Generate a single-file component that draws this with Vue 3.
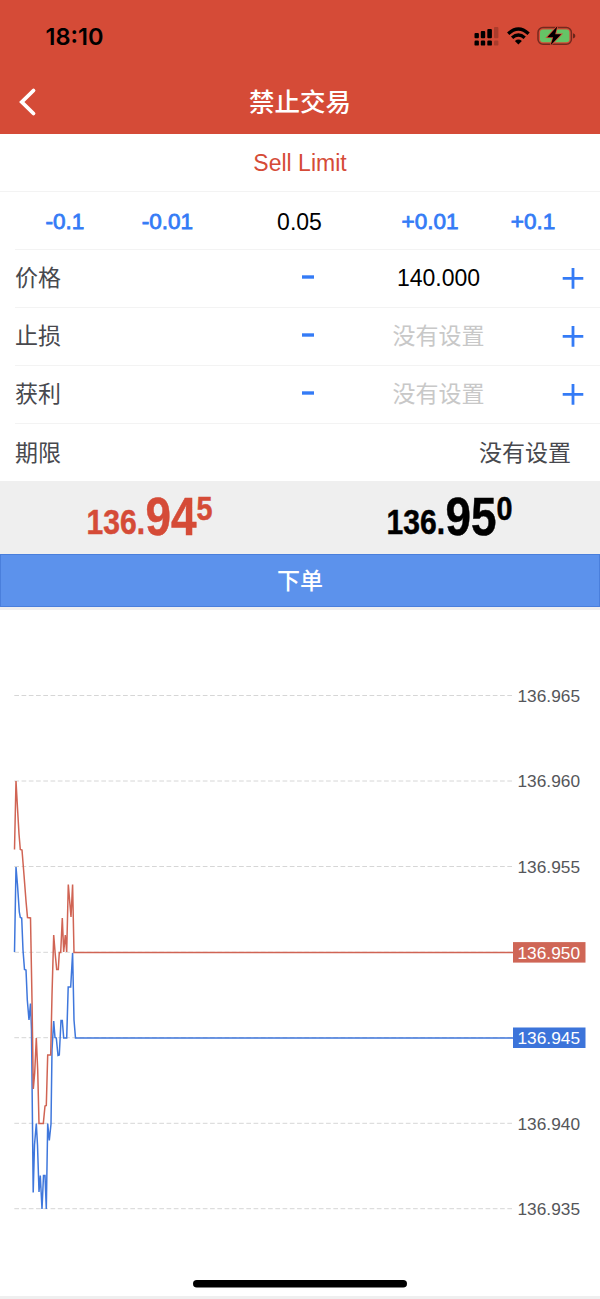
<script setup>
const steps = [
  { name: 'price', label: '价格', value: '140.000', set: true },
  { name: 'stop', label: '止损', value: '没有设置', set: false },
  { name: 'profit', label: '获利', value: '没有设置', set: false },
]

const quotes = [
  { side: 'bid', whole: '136.', pips: '94', point: '5' },
  { side: 'ask', whole: '136.', pips: '95', point: '0' },
]

const levels = [
  { y: 695.5, text: '136.965' },
  { y: 781, text: '136.960' },
  { y: 866.5, text: '136.955' },
  { y: 952.3, text: '136.950', tag: 'ask' },
  { y: 1037.7, text: '136.945', tag: 'bid' },
  { y: 1123.3, text: '136.940' },
  { y: 1208.7, text: '136.935' },
]

const askLine =
  '14.5,849.5 16,781 17.5,808 19,834 20.3,849.5 22,850 24,875 26,901 27.5,917.5 30.5,918 32,1000 33.3,1089 34.7,1073 36.3,1038 37.7,1070 39,1123.5 43.3,1123.5 45,1106 46.3,1105.5 47.7,1055 50.7,1055 52,995 53.7,935 55.3,955 56.7,969.5 58.3,969.5 59.3,952.5 60.7,952.5 62.3,918 63.7,952 65.3,935 66.7,952 68.3,884.5 70,905 71,917 72.6,884.5 74,952.5 513,952.5'
const bidLine =
  '14.5,952 16,867 17.5,885 19.3,912 20.3,917.5 21.7,918 23,950 24.5,969.5 26,970 27.3,1000 29,1020 30.5,1003.5 31.5,1030 33.2,1192.5 34.5,1145 36.3,1123.5 37.5,1145 39,1192 40.3,1175.5 42,1209 43.5,1175.5 45,1175.5 46.3,1209 47.7,1123.5 49.3,1140.5 51,1124 52,1050 53.7,1021 55,1037.5 56.3,1038 58,1055.5 59.3,1055 61,1020.5 62.3,1020.5 63.7,1038 66.7,1038 68.2,987 70.7,987 72.6,953 74,1020 75.5,1038 513,1038'
</script>

<template>
  <main class="screen">
    <header class="top">
      <div class="status">
        <span class="clock">18:10</span>
        <svg class="indicators" width="104" height="24" viewBox="472 24 104 24">
          <g>
            <rect x="474.5" y="33" width="4.4" height="5.2" rx="1" />
            <rect x="480.8" y="31" width="4.4" height="7.2" rx="1" />
            <rect x="487.3" y="29" width="4.6" height="9.2" rx="1" />
            <rect x="494" y="27" width="4.4" height="11.2" rx="1" opacity=".2" />
            <rect x="474.5" y="40.6" width="4.4" height="5" rx="1.2" />
            <rect x="480.8" y="40.6" width="4.4" height="5" rx="1.2" />
            <rect x="487.3" y="40.6" width="4.6" height="5" rx="1.2" />
            <rect x="494" y="40.6" width="4.4" height="5" rx="1.2" opacity=".2" />
          </g>
          <g fill="none" stroke="#000" stroke-width="3.3">
            <path d="M508.2 33.8Q518.4 24.3 528.6 33.8" />
            <path d="M512.1 37.8Q518.4 32.1 524.7 37.8" />
          </g>
          <path d="M514.9 40.9Q518.4 38 521.9 40.9L518.4 44.4Z" />
          <rect x="538" y="27.6" width="33.4" height="16.6" rx="5" fill="none" stroke="#000" stroke-opacity=".45" stroke-width="1.5" />
          <path d="M573 33.2Q575.4 34 575.4 35.9T573 38.6Z" opacity=".5" />
          <rect x="540" y="29.6" width="29.4" height="12.6" rx="3" fill="#65c466" />
          <path d="M557.3 26.3L547.2 37.2H553.2L550.6 45.3L561.2 34.2H555.2Z" stroke="#d54b37" stroke-width="1.6" paint-order="stroke" />
        </svg>
      </div>
      <div class="nav">
        <svg class="back" width="20" height="30" viewBox="0 0 20 30"><path d="M16.5 3.5L4.8 15L16.5 26.5" /></svg>
        <h1>禁止交易</h1>
      </div>
    </header>

    <div class="order-type">Sell Limit</div>

    <div class="volume">
      <b>-0.1</b><b>-0.01</b><span>0.05</span><b>+0.01</b><b>+0.1</b>
    </div>

    <div class="fields">
      <div v-for="s in steps" :key="s.name" class="row stepper">
        <span class="label">{{ s.label }}</span>
        <svg class="minus" width="14" height="22" viewBox="0 0 14 22"><path d="M1 9H13" /></svg>
        <span class="value" :class="{ empty: !s.set }">{{ s.value }}</span>
        <svg class="plus" width="22" height="22" viewBox="0 0 22 22"><path d="M.7 10.4H21.3M11 .1V20.7" /></svg>
      </div>
      <div class="row expiry">
        <span class="label">期限</span>
        <span>没有设置</span>
      </div>
    </div>

    <div class="quotes">
      <svg v-for="q in quotes" :key="q.side" :class="q.side" width="300" height="73" viewBox="0 0 300 73">
        <text x="86.5" y="53" font-size="35" textLength="58.5" lengthAdjust="spacingAndGlyphs">{{ q.whole }}</text>
        <text x="145.5" y="54" font-size="54" textLength="51" lengthAdjust="spacingAndGlyphs">{{ q.pips }}</text>
        <text x="196.5" y="39.3" font-size="32.5" textLength="16" lengthAdjust="spacingAndGlyphs">{{ q.point }}</text>
      </svg>
    </div>

    <button class="submit">下单</button>

    <section class="chart">
      <svg width="600" height="686" viewBox="0 610 600 686">
        <g v-for="l in levels" :key="l.text">
          <line class="grid" x1="14.3" x2="512" :y1="l.y" :y2="l.y" />
        </g>
        <polyline class="bid-line" :points="bidLine" />
        <polyline class="ask-line" :points="askLine" />
        <g v-for="l in levels" :key="l.text">
          <rect v-if="l.tag" :class="l.tag + '-tag'" x="513" :y="l.y - 10.2" width="72.5" height="20.5" />
          <text class="tick" :class="{ tagged: l.tag }" x="517.5" :y="l.y + 6.4" textLength="62.5">{{ l.text }}</text>
        </g>
        <rect x="193" y="1280" width="214" height="7.5" rx="3.75" />
      </svg>
    </section>
  </main>
</template>

<style>
body {
  margin: 0;
}
</style>

<style scoped>
.screen {
  width: 600px;
  height: 1299px;
  overflow: hidden;
  background: #fff;
  color: #000;
  font-family: "Liberation Sans", "Noto Sans CJK SC", sans-serif;
  font-size: 23px;
}
.top {
  height: 134px;
  background: #d54b37;
}
.status {
  height: 72px;
  display: flex;
  align-items: center;
  justify-content: space-between;
  padding: 0 24px 0 45.5px;
}
.clock {
  font: 600 23.5px Inter, sans-serif;
}
.nav {
  height: 60px;
  display: grid;
  grid-template-columns: 1fr auto 1fr;
  align-items: center;
}
.back {
  margin-left: 17px;
  fill: none;
  stroke: #fff;
  stroke-width: 3.8;
  stroke-linecap: round;
}
h1 {
  margin: 0;
  grid-column: 2;
  color: #fff;
  font-size: 25.5px;
  font-weight: 500;
  line-height: 60px;
}
.order-type {
  height: 57.5px;
  line-height: 58px;
  box-sizing: border-box;
  border-bottom: 1px solid #f3f3f3;
  text-align: center;
  color: #d54b37;
}
.volume {
  height: 57.5px;
  display: grid;
  grid-template-columns: 102px 103px 161px 100px 106px;
  padding-left: 14px;
  text-align: center;
  line-height: 61px;
}
.volume b {
  color: #347bf6;
  font-size: 22.5px;
  font-weight: 400;
  line-height: 59px;
  -webkit-text-stroke: 0.8px #347bf6;
}
.fields {
  margin-left: 15px;
}
.row {
  height: 58px;
  box-sizing: border-box;
  border-top: 1px solid #f3f3f3;
  display: grid;
  align-items: center;
  line-height: 57px;
}
.stepper {
  grid-template-columns: 286px 14px 216px 1fr;
}
.label,
.expiry {
  color: #48494e;
}
.value {
  padding-left: 31px;
  text-align: center;
}
.value.empty {
  color: #c8c8c8;
}
.minus,
.plus {
  fill: none;
  stroke: #347bf6;
  stroke-width: 2.8;
}
.minus {
  stroke-width: 3.4;
}
.plus {
  justify-self: end;
  margin-right: 16px;
}
.expiry {
  display: flex;
  justify-content: space-between;
  padding: 1px 29px 0 0;
}
.quotes {
  height: 73px;
  display: flex;
  background: #efefef;
  font-weight: 700;
}
.quotes text {
  stroke-width: 0.5px;
}
.bid {
  fill: #d54b37;
  stroke: #d54b37;
}
.ask {
  stroke: #000;
}
.submit {
  display: block;
  width: 600px;
  height: 53px;
  padding: 0 0 3px;
  border: 1px solid #4a7fdc;
  border-radius: 0;
  background: #5c92ec;
  color: #fff;
  font: 500 23px "Liberation Sans", "Noto Sans CJK SC", sans-serif;
}
.chart {
  height: 686px;
  border-top: 3px solid #f0f0f0;
  border-bottom: 3px solid #efefef;
}
.chart svg {
  display: block;
}
.grid {
  stroke: #d6d6d6;
  stroke-width: 1;
  stroke-dasharray: 4.7 2.55;
}
.bid-line,
.ask-line {
  fill: none;
  stroke-width: 1.5;
}
.bid-line {
  stroke: #3f77dc;
}
.ask-line {
  stroke: #d06454;
}
.bid-tag {
  fill: #3c74da;
}
.ask-tag {
  fill: #cf6656;
}
.tick {
  font-size: 17.3px;
  fill: #55565a;
}
.tick.tagged {
  fill: #fff;
}
</style>
